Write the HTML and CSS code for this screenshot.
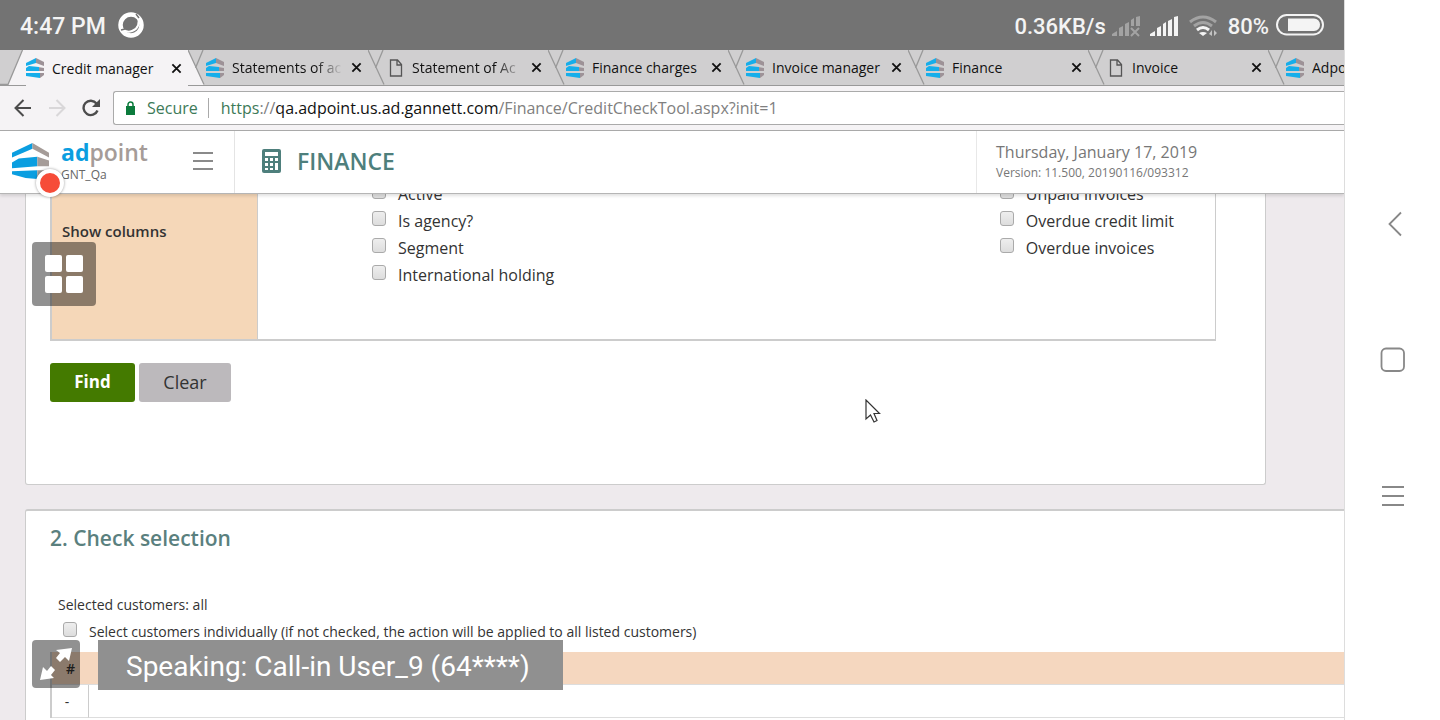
FILE: index.html
```html
<!DOCTYPE html>
<html lang="en">
<head>
<meta charset="utf-8">
<title>Credit manager</title>
<link rel="stylesheet" href="styles.css">
</head>
<body>
<svg class="defs" aria-hidden="true">
  <symbol id="logo" viewBox="0 0 38 38">
    <path fill="#0b9ee0" d="M0 10 21 0v6L0 15zM0 20 7 16l19-2v10L0 26zM0 29l26-1v9L14 36 0 32z"/>
    <path fill="#a59c98" d="M21 0 38 10v5L21 6zM26 14l12 4v6l-12 0zM26 28l12 0v4l-12 5z"/>
  </symbol>
  <symbol id="fav" viewBox="0 0 18 20">
    <path fill="#16aeea" d="M0 5 10 0v5L0 8zM0 15h14v5L0 18z"/>
    <path fill="#9d9297" d="M10 0l8 4v4l-8-3zM12 9l6 1v3l-6 0zM14 15h4v2l-4 3z"/>
    <path fill="#16aeea" d="M0 10 3 8l10 1v4L0 13z"/>
  </symbol>
  <symbol id="page" viewBox="0 0 18 20">
    <path fill="none" stroke="#555" stroke-width="1.3" d="M4.5 2h7l4 4.500v11.500h-11zM11 2v5h4.500"/>
  </symbol>
  <symbol id="close" viewBox="0 0 12 12">
    <path fill="none" stroke="#111" stroke-width="2" d="M1.500 1.500l9 9M10.500 1.500l-9 9"/>
  </symbol>
  <symbol id="sep" viewBox="0 0 18 35">
    <path fill="none" stroke="#999" stroke-width="1.300" d="M0 0l16 34.500M15 0 7.500 18"/>
  </symbol>
</svg>

<div class="device">
  <div class="screen">
    <div class="status">
      <span>4:47 PM</span>
      <svg class="status-app" width="26" height="26" viewBox="0 0 26 26">
        <circle cx="13" cy="13" r="10.500" fill="none" stroke="#fff" stroke-width="4.500"/>
        <path d="M20 4q3 12-6 15-5 2-10-2" fill="none" stroke="#fff" stroke-width="2"/>
        <path d="M18 2l3 4M3 18l4-1" stroke="#737373" stroke-width="1.500"/>
      </svg>
      <span class="speed">0.36KB/s</span>
      <svg class="signal" width="28" height="21" viewBox="0 0 28 21" fill="#a3a3a3">
        <path d="M0 20v-2l5-3v5zM7 12l4-2v10H7zM13 8l4-2v14h-4zM19 4l3-2v8h-3zM24 1l4-1v10h-4z"/>
        <path d="M19 12l8 8M27 12l-8 8" stroke="#a3a3a3" stroke-width="2"/>
      </svg>
      <svg class="signal" width="28" height="21" viewBox="0 0 28 21" fill="#f4f4f4">
        <path d="M0 20v-2l5-3v5zM7 12l4-2v10H7zM13 8l3-2v14h-3zM18 5l4-2v17h-4zM24 1l4-1v20h-4z"/>
      </svg>
      <svg class="wifi" width="30" height="22" viewBox="0 0 30 22" fill="none" stroke-width="3">
        <path d="M2 7q13-10 26 0M6 11q9-7 18 0" stroke="#a3a3a3"/>
        <path d="M9 15q6-5 12 0" stroke="#f4f4f4"/>
        <path d="M11 18q4-2 8 0l-4 3z" fill="#f4f4f4"/>
        <path d="M24 21v-6l-3 4zM26 15v6l3-3z" fill="#c4c4c4"/>
      </svg>
      <span class="percent">80%</span>
      <svg class="battery" width="48" height="22" viewBox="0 0 48 22">
        <rect x="1" y="1" width="46" height="19.500" rx="9.750" fill="none" stroke="#f4f4f4" stroke-width="2"/>
        <path d="M12 4.500h26a6 6 0 0 1 6 6v0a6 6 0 0 1-6 6.500H12z" fill="#f4f4f4"/>
      </svg>
    </div>

    <div class="tabs">
      <svg class="first-edge" width="26" height="35" viewBox="0 0 26 35">
        <path d="M22 0h4v35H8z" fill="#f5f3f5"/><path d="M22.500 0 8 34.500H0" fill="none" stroke="#999" stroke-width="1.300"/>
      </svg>
      <div class="tab active"><svg class="fav"><use href="#fav"/></svg><span>Credit manager</span><button aria-label="Close tab"><svg><use href="#close"/></svg></button></div>
      <svg class="sep" viewBox="0 0 18 35"><path d="M0 0l16 35H0z" fill="#f5f3f5"/><use href="#sep"/></svg>
      <div class="tab"><svg class="fav"><use href="#fav"/></svg><span class="fade">Statements of ac</span><button aria-label="Close tab"><svg><use href="#close"/></svg></button></div>
      <svg class="sep"><use href="#sep"/></svg>
      <div class="tab"><svg class="fav"><use href="#page"/></svg><span class="fade">Statement of Ac</span><button aria-label="Close tab"><svg><use href="#close"/></svg></button></div>
      <svg class="sep"><use href="#sep"/></svg>
      <div class="tab"><svg class="fav"><use href="#fav"/></svg><span>Finance charges</span><button aria-label="Close tab"><svg><use href="#close"/></svg></button></div>
      <svg class="sep"><use href="#sep"/></svg>
      <div class="tab"><svg class="fav"><use href="#fav"/></svg><span>Invoice manager</span><button aria-label="Close tab"><svg><use href="#close"/></svg></button></div>
      <svg class="sep"><use href="#sep"/></svg>
      <div class="tab"><svg class="fav"><use href="#fav"/></svg><span>Finance</span><button aria-label="Close tab"><svg><use href="#close"/></svg></button></div>
      <svg class="sep"><use href="#sep"/></svg>
      <div class="tab"><svg class="fav"><use href="#page"/></svg><span>Invoice</span><button aria-label="Close tab"><svg><use href="#close"/></svg></button></div>
      <svg class="sep"><use href="#sep"/></svg>
      <div class="tab"><svg class="fav"><use href="#fav"/></svg><span>Adpoint</span></div>
    </div>

    <div class="toolbar">
      <button aria-label="Back"><svg width="18" height="18" viewBox="0 0 18 18" fill="none" stroke="#4c4c4c" stroke-width="2"><path d="M17 9H2M9.500 1 1.500 9l8 8"/></svg></button>
      <button aria-label="Forward"><svg width="18" height="18" viewBox="0 0 18 18" fill="none" stroke="#d9d7d9" stroke-width="2"><path d="M1 9h15M8.500 1l8 8-8 8"/></svg></button>
      <button aria-label="Reload"><svg width="18" height="18" viewBox="0 0 18 18"><path d="M15.500 11.500A7.200 7.200 0 1 1 14.500 4.500" fill="none" stroke="#4c4c4c" stroke-width="2.400"/><path d="M18 0v8h-8z" fill="#4c4c4c"/></svg></button>
      <div class="address">
        <svg width="9" height="14" viewBox="0 0 9 14"><path d="M0 5h9v9H0z" fill="#0c7b3c"/><path d="M2 6V3.500a2.500 2.500 0 0 1 5 0V6" fill="none" stroke="#0c7b3c" stroke-width="1.500"/></svg>
        <span class="secure">Secure</span>
        <span class="url"><span class="scheme">https</span>://<b>qa.adpoint.us.ad.gannett.com</b>/Finance/CreditCheckTool.aspx?init=1</span>
      </div>
    </div>

    <header class="app-header">
      <div class="brand">
        <svg class="logo" width="37" height="37"><use href="#logo"/></svg>
        <div><div class="name"><span>ad</span>point</div><div class="env">GNT_Qa</div></div>
        <span class="rec"></span>
      </div>
      <button class="menu" aria-label="Menu"><svg width="20" height="18" viewBox="0 0 20 18" stroke="#8a8a8a" stroke-width="2"><path d="M0 1h20M0 9h20M0 17h20"/></svg></button>
      <div class="title">
        <svg width="19" height="24" viewBox="0 0 19 24"><rect width="19" height="24" rx="2" fill="#4e7f7c"/><path fill="#fff" d="M3 3h13v4H3zM3 9h3v3H3zM8 9h3v3H8zM13 9h3v3h-3zM3 14h3v3H3zM8 14h3v3H8zM3 19h3v2H3zM8 19h3v2H8zM13 14h3v7h-3z"/></svg>
        <h1>FINANCE</h1>
      </div>
      <div class="info"><div class="date">Thursday, January 17, 2019</div><div class="version">Version: 11.500, 20190116/093312</div></div>
    </header>

    <main class="content">
      <section class="panel search">
        <div class="criteria">
          <div class="label">Show columns</div>
          <div class="options">
            <div class="list">
              <label><input type="checkbox">Active</label>
              <label><input type="checkbox">Is agency?</label>
              <label><input type="checkbox">Segment</label>
              <label><input type="checkbox">International holding</label>
            </div>
            <div class="list">
              <label><input type="checkbox">Unpaid invoices</label>
              <label><input type="checkbox">Overdue credit limit</label>
              <label><input type="checkbox">Overdue invoices</label>
            </div>
          </div>
        </div>
        <div class="actions"><button class="find">Find</button><button class="clear">Clear</button></div>
      </section>
      <section class="panel selection">
        <h2>2. Check selection</h2>
        <div class="selected">Selected customers: all</div>
        <label class="individual"><input type="checkbox">Select customers individually (if not checked, the action will be applied to all listed customers)</label>
        <table>
          <thead><tr><th>#</th><th></th></tr></thead>
          <tbody><tr><td>-</td><td></td></tr></tbody>
        </table>
      </section>
    </main>
  </div>

  <nav class="navbar">
    <button aria-label="Back"><svg width="26" height="26" viewBox="0 0 26 26"><path d="M21 1.500 9.500 13 21 24.500" fill="none" stroke="#888" stroke-width="1.800"/></svg></button>
    <button aria-label="Home"><svg width="26" height="26" viewBox="0 0 26 26"><rect x="1.500" y="1.500" width="22.500" height="22.500" rx="4.500" fill="none" stroke="#888" stroke-width="1.800"/></svg></button>
    <button aria-label="Recent"><svg width="26" height="26" viewBox="0 0 26 26"><path d="M2 4h22M2 13h22M2 22h22" stroke="#888" stroke-width="1.800"/></svg></button>
  </nav>

  <button class="overlay grid-button" aria-label="Grid view"><i></i><i></i><i></i><i></i></button>
  <button class="overlay expand" aria-label="Expand"><svg width="32" height="32" viewBox="0 0 32 32" fill="#fff"><path d="M32 0l-3 13-4-4-5 5-4-4 4-5-4-3zM0 32l3-13 4 4 4-5 4 4-4 5 3 3z"/></svg></button>
  <div class="speaking">Speaking: Call-in User_9 (64****)</div>
  <svg class="cursor" width="16" height="24" viewBox="0 0 16 24"><path d="M1 1v19l4.500-4 3.500 7 3-1.500L9 14.500h5.500z" fill="#fff" stroke="#333" stroke-width="1.200"/></svg>
</div>
</body>
</html>
```
FILE: styles.css
```css
* { box-sizing: border-box; }
body { margin: 0; font-family: "Open Sans", "Noto Sans", sans-serif; color: #333; }
button { border: 0; padding: 0; background: none; font: inherit; color: inherit; }
svg { display: block; flex: none; }
.defs { position: absolute; width: 0; height: 0; }
.device { position: relative; display: flex; height: 100vh; overflow: hidden; background: #fff; }
.screen { flex: 1; min-width: 0; display: flex; flex-direction: column; overflow: hidden; }

.status { flex: none; display: flex; align-items: center; height: 50px; padding: 0 20px; background: #737373; color: #f4f4f4; font: 500 23px/46px Roboto, sans-serif; }
.status span { padding-top: 4px; }
.status-app { margin-left: 12px; }
.speed { margin-left: auto; font-size: 22px; }
.signal { margin: 2px 0 0 6px; }
.signal + .signal { margin-left: 10px; }
.wifi { margin: 2px 10px 0; }
.percent { margin-right: 7px; font-size: 22px; }

.tabs { flex: none; display: flex; height: 36px; background: #d0cfd0; border-bottom: 1px solid #999; font-size: 14px; color: #111; }
.first-edge { margin-bottom: -1px; }
.tab { flex: none; display: flex; align-items: center; gap: 8px; width: 162px; padding-right: 6px; }
.active { background: #f5f3f5; margin-bottom: -1px; }
.tab span { flex: 1; min-width: 0; overflow: hidden; white-space: nowrap; }
.fade { -webkit-mask-image: linear-gradient(90deg, #000 75%, transparent); mask-image: linear-gradient(90deg, #000 75%, transparent); }
.fav { width: 18px; height: 20px; }
.tab button svg { width: 11px; height: 11px; }
.sep { width: 18px; height: 35px; }

.toolbar { flex: none; display: flex; align-items: center; gap: 16px; height: 45px; padding-left: 14px; background: #f5f3f5; border-bottom: 1px solid #aaa; }
.address { flex: 1; display: flex; align-items: center; height: 34px; margin-left: -3px; padding-left: 12px; background: #fff; border: 1px solid #aaa; border-right: 0; border-radius: 3px 0 0 3px; font-size: 16px; line-height: 20px; }
.secure { margin-left: 12px; padding-right: 10px; border-right: 1px solid #aaa; color: #3d7a58; }
.url { margin-left: 12px; color: #808080; white-space: nowrap; }
.url b { font-weight: 400; color: #111; }
.scheme { color: #3d7a58; }

.app-header { position: relative; z-index: 1; flex: none; display: flex; height: 63px; background: #fff; border-bottom: 1px solid #b5b5b5; box-shadow: 0 2px 3px rgba(0, 0, 0, .12); }
.brand { position: relative; display: flex; gap: 12px; width: 172px; padding: 7px 0 0 12px; }
.logo { margin-top: 5px; }
.name { font-size: 23px; line-height: 28px; font-weight: 600; color: #a59c98; }
.name span { color: #0b9ee0; font-weight: 700; }
.env { font-size: 12px; line-height: 18px; color: #666; }
.rec { position: absolute; left: 36px; top: 38px; width: 28px; height: 28px; border: 4px solid #fff; border-radius: 50%; background: #f64c38; box-shadow: 0 0 3px rgba(0, 0, 0, .4); }
.menu { display: flex; align-items: center; justify-content: center; width: 63px; padding-bottom: 2px; border-right: 1px solid #e4e4e4; }
.title { flex: 1; display: flex; align-items: center; gap: 16px; padding: 0 0 2px 27px; }
h1 { margin: 0; font-size: 23px; font-weight: 600; color: #4e7f7c; }
.info { width: 368px; padding: 10px 0 0 19px; border-left: 1px solid #e8e8e8; color: #777; }
.date { font-size: 16px; line-height: 22px; }
.version { font-size: 12px; line-height: 20px; }

.content { flex: 1; min-height: 0; padding-left: 25px; overflow: hidden; background: #eeeaed; }
.panel { background: #fff; border: 1px solid #ccc; }
.search { margin-right: 78px; padding: 0 49px 82px 24px; border-top: 0; border-radius: 0 0 3px 3px; }
.criteria { display: flex; border: solid #ccc; border-width: 0 1px 2px 2px; font-size: 16px; }
.label { width: 206px; padding: 25px 10px; background: #f5d7b8; border-right: 1px solid #ccc; font-size: 15px; font-weight: 600; line-height: 24px; }
.options { flex: 1; display: flex; justify-content: space-between; padding: 0 41px 51px 114px; }
.list { margin-top: -14px; }
.list label { display: flex; align-items: center; gap: 12px; height: 27px; }
input { appearance: none; flex: none; width: 14px; height: 15px; margin: 0 0 5px; border: 1px solid #aaa; border-radius: 3px; background: linear-gradient(#eee, #ddd); }
.actions { display: flex; gap: 4px; padding-top: 22px; font-size: 17px; line-height: 36px; }
.actions button { height: 39px; padding-bottom: 2px; border-radius: 3px; }
.actions .find { width: 85px; background: #447a00; color: #fff; font-weight: 700; }
.actions .clear { width: 92px; background: #bcb9bc; font-size: 18px; }

.selection { height: 100%; margin-top: 24px; padding: 12px 0 0 24px; border-top-width: 2px; border-right: 0; border-radius: 3px 0 0; font-size: 14px; }
h2 { margin: 0 0 38px; font-size: 21px; line-height: 30px; font-weight: 600; color: #5a807e; }
.selected { padding-left: 8px; line-height: 27px; }
.individual { display: flex; align-items: center; gap: 12px; height: 27px; padding-left: 13px; white-space: nowrap; }
table { width: 100%; margin-top: 7px; border-spacing: 0; border-left: 2px solid #ccc; }
th, td { height: 33px; padding: 0; text-align: center; border-bottom: 1px solid #ddd; }
th { background: #f5d7bf; font-weight: 600; }
th:first-child, td:first-child { width: 37px; }
td:first-child { padding-right: 6px; border-right: 1px solid #ccc; }

.navbar { flex: none; display: flex; flex-direction: column; align-items: center; justify-content: center; gap: 110px; width: 96px; border-left: 1px solid #ddd; }
.overlay { position: absolute; left: 32px; border-radius: 4px; background: rgba(0, 0, 0, .43); }
.grid-button { top: 242px; display: grid; grid-template-columns: 17px 17px; gap: 4px; place-content: center; width: 64px; height: 64px; }
.grid-button i { height: 17px; border-radius: 2px; background: #fff; }
.expand { top: 640px; display: grid; place-content: center; width: 48px; height: 48px; }
.speaking { position: absolute; left: 98px; top: 640px; padding: 3px 33px 0 28px; background: #909090; color: #fff; font: 400 28px/47px Roboto, sans-serif; }
.cursor { position: absolute; left: 865px; top: 399px; }
```
